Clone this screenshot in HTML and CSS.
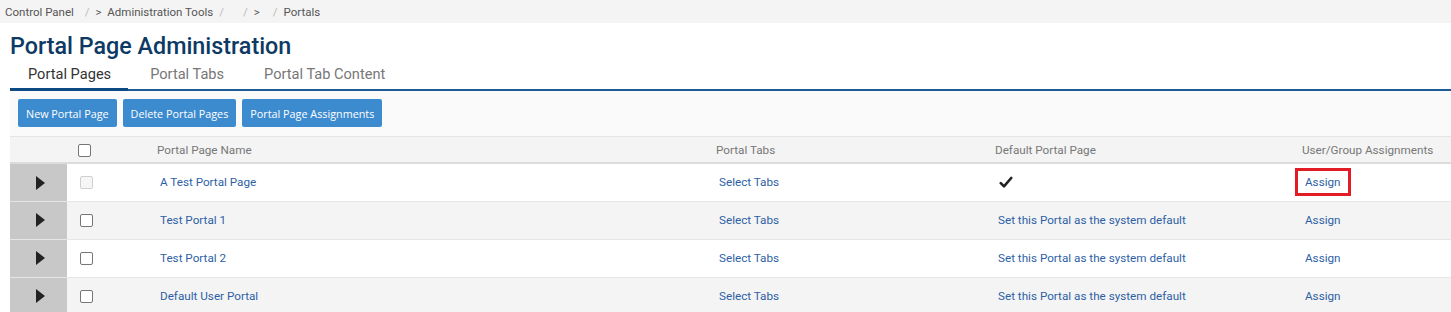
FILE: index.html
```html
<!DOCTYPE html>
<html>

<head>
    <meta charset="utf-8">
    <title>Portal Page Administration</title>
    <link rel="stylesheet" href="styles.css">
</head>

<body>
    <div class="crumbs">
        <a class="first" href="javascript:void(0)">Control Panel</a>
        <span class="sep">/</span>
        <a href="javascript:void(0)">&gt;&nbsp; Administration Tools</a>
        <span class="sep">/</span>
        <span class="blank"></span>
        <span class="sep">/</span>
        <a class="gt" href="javascript:void(0)">&gt;</a>
        <span class="sep">/</span>
        <span>Portals</span>
    </div>

    <div class="page">
        <h1 class="title">Portal Page Administration</h1>
        <ul class="tabs">
            <li class="current"><a href="javascript:void(0)">Portal Pages</a></li>
            <li><a href="javascript:void(0)">Portal Tabs</a></li>
            <li><a href="javascript:void(0)">Portal Tab Content</a></li>
        </ul>

        <div class="toolbar">
            <button class="btn">New Portal Page</button>
            <button class="btn">Delete Portal Pages</button>
            <button class="btn">Portal Page Assignments</button>
        </div>

        <table class="grid">
            <colgroup>
                <col class="c-exp">
                <col class="c-chk">
                <col class="c-name">
                <col class="c-tabs">
                <col class="c-def">
                <col class="c-asg">
            </colgroup>
            <thead>
                <tr>
                    <th></th>
                    <th class="chk"><span class="box"></span></th>
                    <th>Portal Page Name</th>
                    <th>Portal Tabs</th>
                    <th>Default Portal Page</th>
                    <th>User/Group Assignments</th>
                </tr>
            </thead>
            <tbody>
                <tr>
                    <td class="exp"><span class="arrow"></span></td>
                    <td class="chk"><span class="box disabled"></span></td>
                    <td><a href="javascript:void(0)">A Test Portal Page</a></td>
                    <td><a href="javascript:void(0)">Select Tabs</a></td>
                    <td>
                        <svg class="tick" width="14" height="13" viewBox="0 0 14 13">
                            <path d="M1.8 7.2 L5 10.4 L12.2 2" fill="none" stroke="#222" stroke-width="2.6" stroke-linecap="round" stroke-linejoin="round"/>
                        </svg>
                    </td>
                    <td><a class="marked" href="javascript:void(0)">Assign</a></td>
                </tr>
                <tr>
                    <td class="exp"><span class="arrow"></span></td>
                    <td class="chk"><span class="box"></span></td>
                    <td><a href="javascript:void(0)">Test Portal 1</a></td>
                    <td><a href="javascript:void(0)">Select Tabs</a></td>
                    <td><a href="javascript:void(0)">Set this Portal as the system default</a></td>
                    <td><a href="javascript:void(0)">Assign</a></td>
                </tr>
                <tr>
                    <td class="exp"><span class="arrow"></span></td>
                    <td class="chk"><span class="box"></span></td>
                    <td><a href="javascript:void(0)">Test Portal 2</a></td>
                    <td><a href="javascript:void(0)">Select Tabs</a></td>
                    <td><a href="javascript:void(0)">Set this Portal as the system default</a></td>
                    <td><a href="javascript:void(0)">Assign</a></td>
                </tr>
                <tr>
                    <td class="exp"><span class="arrow"></span></td>
                    <td class="chk"><span class="box"></span></td>
                    <td><a href="javascript:void(0)">Default User Portal</a></td>
                    <td><a href="javascript:void(0)">Select Tabs</a></td>
                    <td><a href="javascript:void(0)">Set this Portal as the system default</a></td>
                    <td><a href="javascript:void(0)">Assign</a></td>
                </tr>
            </tbody>
        </table>
    </div>
</body>

</html>
```

FILE: styles.css
```css
* {
    padding: 0;
    margin: 0;
    box-sizing: border-box;
}

ul {
    list-style: none;
}

a {
    text-decoration: none;
}

html,
body {
    width: 100%;
    height: 100%;
    overflow: hidden;
}

body {
    font-family: Roboto, "Liberation Sans", sans-serif;
    background: #fff;
    color: #333;
}

/* 面包屑 */
.crumbs {
    height: 23px;
    background: #f4f4f4;
    padding-left: 5px;
    display: flex;
    align-items: center;
    font-size: 11.5px;
    color: #555;
}

.crumbs a {
    color: #555;
}

.crumbs .sep {
    color: #bbb;
    margin: 0 6px;
}

.crumbs .first {
    padding-right: 5px;
}

.crumbs .blank {
    width: 7px;
}

.crumbs .gt {
    padding-right: 7px;
}

.page {
    padding-left: 10px;
}

.title {
    font-size: 23.3px;
    font-weight: 500;
    color: #0d3a64;
    line-height: 26px;
    margin-top: 10px;
}

/* 选项卡 */
.tabs {
    display: flex;
    border-bottom: 2px solid #1d5b97;
    height: 29px;
    margin-top: 3px;
}

.tabs li {
    padding: 0 18px;
    margin-right: 4px;
    font-size: 14.6px;
    line-height: 24px;
}

.tabs li a {
    color: #777;
}

.tabs li.current {
    padding-right: 17px;
    border-bottom: 3px solid #0b4a85;
    margin-bottom: -2px;
}

.tabs li.current a {
    color: #333;
}

/* 按钮 */
.toolbar {
    background: #fafafa;
    padding: 8px 8px 9px;
    display: flex;
    gap: 6px;
    border-bottom: 1px solid #e4e4e4;
}

.btn {
    height: 28px;
    padding: 0 8px;
    border: none;
    border-radius: 2px;
    background: #3d8bcf;
    color: #fff;
    font-family: "Open Sans", "Liberation Sans", sans-serif;
    font-size: 10.8px;
}

/* 表格 */
.grid {
    width: 1460px;
    border-collapse: collapse;
    table-layout: fixed;
    font-size: 11.7px;
}

.c-exp {
    width: 57px;
}

.c-chk {
    width: 80px;
}

.c-name {
    width: 559px;
}

.c-tabs {
    width: 279px;
}

.c-def {
    width: 307px;
}

.grid th {
    height: 26px;
    background: #f4f4f4;
    border-bottom: 2px solid #dcdcdc;
    text-align: left;
    font-weight: 400;
    color: #777;
    padding-left: 10px;
}

.grid td {
    height: 38px;
    padding-left: 13px;
    border-bottom: 1px solid #e6e6e6;
}

.grid tbody tr:nth-child(even) td {
    background: #f4f4f4;
}

.grid td a {
    color: #2e5fa5;
}

.grid tbody tr td.exp {
    background: #c8c8c8;
    padding-left: 0;
    text-align: center;
}

.arrow {
    display: inline-block;
    width: 0;
    height: 0;
    border-top: 7px solid transparent;
    border-bottom: 7px solid transparent;
    border-left: 9px solid #222;
    vertical-align: middle;
    margin-left: 4px;
}

.grid .chk {
    padding-left: 13px;
}

.grid th.chk {
    padding-left: 11px;
}

.box {
    display: inline-block;
    width: 13px;
    height: 13px;
    border: 1px solid #767676;
    border-radius: 2px;
    background: #fff;
    vertical-align: middle;
}

.box.disabled {
    border-color: #d0d0d0;
    background: #f6f6f6;
}

.tick {
    display: block;
    margin-left: 1px;
}

.grid td a.marked {
    display: inline-block;
    border: 3px solid #e31b25;
    padding: 4px 7px;
    margin-left: -10px;
}
```
